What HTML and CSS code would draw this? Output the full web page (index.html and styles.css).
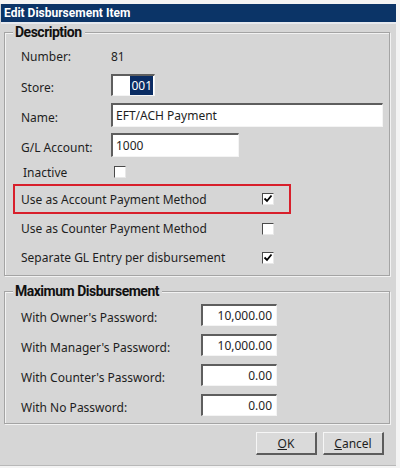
FILE: index.html
```html
<!DOCTYPE html>
<html lang="en">
<head>
    <meta charset="UTF-8">
    <meta name="viewport" content="width=device-width, initial-scale=1.0">
    <title>Edit Disbursement Item</title>
    <link rel="stylesheet" href="styles.css">
</head>
<body>
    <div class="window">
        <div class="titlebar">Edit Disbursement Item</div>

        <div class="group">
            <div class="group-title">Description</div>

            <div class="row row-number">
                <span class="label">Number:</span>
                <span class="value">81</span>
            </div>
            <div class="row row-field">
                <span class="label">Store:</span>
                <div class="field field-store"><span class="selected">001</span></div>
            </div>
            <div class="row row-field">
                <span class="label">Name:</span>
                <div class="field field-name">EFT/ACH Payment</div>
            </div>
            <div class="row row-field">
                <span class="label">G/L Account:</span>
                <div class="field field-gl">1000</div>
            </div>
            <div class="row row-inactive">
                <span class="label">Inactive</span>
                <span class="check"></span>
            </div>
            <div class="row row-check highlight">
                <span class="label">Use as Account Payment Method</span>
                <span class="check">
                    <svg width="10" height="10" viewBox="0 0 10 10"><path d="M1.5 4.5 L4 7 L8.5 1.5" fill="none" stroke="#000" stroke-width="1.8"/></svg>
                </span>
            </div>
            <div class="row row-check">
                <span class="label">Use as Counter Payment Method</span>
                <span class="check"></span>
            </div>
            <div class="row row-check">
                <span class="label">Separate GL Entry per disbursement</span>
                <span class="check">
                    <svg width="10" height="10" viewBox="0 0 10 10"><path d="M1.5 4.5 L4 7 L8.5 1.5" fill="none" stroke="#000" stroke-width="1.8"/></svg>
                </span>
            </div>
        </div>

        <div class="group group-max">
            <div class="group-title">Maximum Disbursement</div>

            <div class="row row-amount">
                <span class="label">With Owner's Password:</span>
                <div class="field field-amount">10,000.00</div>
            </div>
            <div class="row row-amount">
                <span class="label">With Manager's Password:</span>
                <div class="field field-amount">10,000.00</div>
            </div>
            <div class="row row-amount">
                <span class="label">With Counter's Password:</span>
                <div class="field field-amount">0.00</div>
            </div>
            <div class="row row-amount">
                <span class="label">With No Password:</span>
                <div class="field field-amount">0.00</div>
            </div>
        </div>

        <div class="buttons">
            <button><u>O</u>K</button>
            <button><u>C</u>ancel</button>
        </div>
    </div>
</body>
</html>
```

FILE: styles.css
```css
body {
    margin: 0;
    background: #f4f4f4;
    font-family: "Noto Sans", "Open Sans", sans-serif;
    font-size: 12px;
    color: #1e1e1e;
}

.window {
    width: 396px;
    height: 462px;
    margin-top: 4px;
    background: #d6d6d6;
    border-bottom: 1px solid #b8b8b8;
    box-sizing: border-box;
    overflow: hidden;
}

.titlebar {
    height: 18px;
    line-height: 18px;
    margin-left: 1px;
    padding-left: 3px;
    background: #0b3467;
    color: #fff;
    font-family: Roboto, "Noto Sans", sans-serif;
    font-weight: bold;
    font-size: 12px;
    border-bottom: 2px solid #e6e9ee;
}

.group {
    margin: 8px 6px 0 4px;
    padding: 0 0 3px 0;
    border: 1px solid #a4a4a4;
    box-shadow: inset 1px 1px 0 #f2f2f2, 1px 1px 0 #f2f2f2;
}

.group-max {
    margin-top: 15px;
}

.group-title {
    width: fit-content;
    margin: -9px 0 0 8px;
    padding: 0 3px 0 2px;
    height: 17px;
    line-height: 17px;
    font-family: Roboto, "Noto Sans", sans-serif;
    font-size: 14px;
    font-weight: bold;
    letter-spacing: -0.5px;
    color: #111;
    background: #d6d6d6;
}

.row {
    display: flex;
    align-items: center;
    height: 30px;
    padding-left: 16px;
}

.row .label {
    flex: none;
}

.row-number {
    height: 29px;
    padding-top: 2px;
    box-sizing: border-box;
}

.row-number .label,
.row-field .label {
    width: 90px;
}

.row-field .label,
.row-amount .label {
    margin-top: 5px;
}

.field {
    height: 22px;
    line-height: 20px;
    padding: 0 3px;
    box-sizing: border-box;
    background: #fff;
    border-top: 2px solid #5e5e5e;
    border-left: 2px solid #5e5e5e;
    border-right: 1px solid #f4f4f4;
    border-bottom: 1px solid #f4f4f4;
    white-space: nowrap;
}

.field-store {
    width: 44px;
    text-align: right;
    padding-right: 1px;
}

.selected {
    background: #0a2c63;
    color: #fff;
    padding: 1px 1px;
}

.field-name {
    width: 272px;
    height: 24px;
    line-height: 22px;
}

.field-gl {
    width: 128px;
    height: 24px;
    line-height: 22px;
}

.row-inactive {
    height: 24px;
    padding-left: 18px;
}

.row-inactive .label {
    width: 91px;
}

.row-check {
    height: 29px;
}

.row-check .label {
    width: 241px;
}

.highlight {
    height: 30px;
    width: 278px;
    margin-left: 8px;
    padding-left: 6px;
    border: 2px solid #d8202c;
    box-sizing: border-box;
}

.check {
    width: 12px;
    height: 12px;
    flex: none;
    display: flex;
    align-items: center;
    justify-content: center;
    box-sizing: border-box;
    background: #fff;
    border-top: 1px solid #4a4a4a;
    border-left: 1px solid #4a4a4a;
    border-right: 1px solid #e8e8e8;
    border-bottom: 1px solid #e8e8e8;
}

.row-amount .label {
    width: 180px;
}

.field-amount {
    width: 76px;
    text-align: right;
    padding-right: 4px;
}

.buttons {
    display: flex;
    justify-content: flex-end;
    gap: 6px;
    margin: 8px 12px 0 0;
}

button {
    width: 61px;
    height: 23px;
    padding: 0;
    font-family: inherit;
    font-size: 12px;
    color: #1e1e1e;
    background: #dadada;
    border-top: 1px solid #f6f6f6;
    border-left: 1px solid #f6f6f6;
    border-right: 2px solid #5c5c5c;
    border-bottom: 2px solid #5c5c5c;
}
```
